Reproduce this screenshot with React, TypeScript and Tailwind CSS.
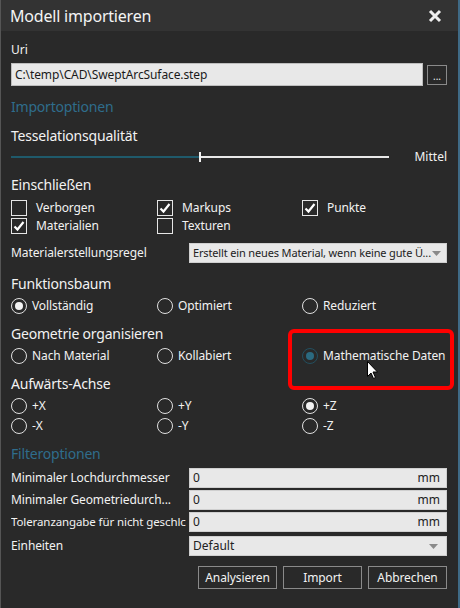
import React from "react";

const font = { fontFamily: '"Segoe UI", "Noto Sans", "Open Sans", sans-serif' };

function CheckBox({ label, checked }: { label: string; checked?: boolean }) {
  return (
    <div className="flex items-center h-[18px]">
      <span className="w-[16px] h-[16px] border border-[#e6e6e6] flex items-center justify-center shrink-0">
        {checked && (
          <svg width="12" height="12" viewBox="0 0 12 12">
            <path d="M1.5 6.5 L4.5 9.5 L10.5 2" fill="none" stroke="#ffffff" strokeWidth="2.2" />
          </svg>
        )}
      </span>
      <span className="ml-[9px] text-[12px] tracking-[-0.1px] text-[#f2f2f2]">{label}</span>
    </div>
  );
}

function Radio({ label, checked, dim }: { label: string; checked?: boolean; dim?: boolean }) {
  return (
    <div className="flex items-center h-[20px]">
      <span
        className={
          "w-[16px] h-[16px] rounded-full border-[1.5px] flex items-center justify-center shrink-0 " +
          (dim ? "border-[#234f5f]" : "border-[#e0e0e0]")
        }
      >
        {checked && (
          <span className={"w-[8px] h-[8px] rounded-full " + (dim ? "bg-[#2b6a80]" : "bg-[#f2f2f2]")} />
        )}
      </span>
      <span className="ml-[5px] text-[12px] tracking-[-0.1px] whitespace-nowrap text-[#f2f2f2]">{label}</span>
    </div>
  );
}

function Header({ children, blue }: { children: React.ReactNode; blue?: boolean }) {
  return (
    <div
      className={
        "h-[20px] leading-[20px] text-[14px] tracking-[-0.2px] " + (blue ? "text-[#2f6d8c]" : "text-[#f2f2f2]")
      }
    >
      {children}
    </div>
  );
}

function Arrow() {
  return (
    <svg width="9" height="5" viewBox="0 0 9 5" className="ml-auto mr-[5px] shrink-0">
      <path d="M0 0 H9 L4.5 5 Z" fill="#8a8a8a" />
    </svg>
  );
}

function FieldRow({ label, small, children }: { label: string; small?: boolean; children: React.ReactNode }) {
  return (
    <div className="flex items-center h-[20px]">
      <div
        className={
          "w-[178px] shrink-0 tracking-[-0.1px] text-[#f2f2f2] whitespace-nowrap overflow-hidden " +
          (small ? "text-[11.5px]" : "text-[12px]")
        }
      >
        {label}
      </div>
      <div className="flex-1 min-w-0 h-[20px] bg-[#e8e8e8] border border-[#cfcfcf] flex items-center px-[3px] text-[12px] text-[#222] whitespace-nowrap overflow-hidden">
        {children}
      </div>
    </div>
  );
}

export default function App() {
  return (
    <div
      className="w-[460px] h-[608px] bg-[#292929] border-l border-[#555] border-r-2 border-r-[#3f6a86] relative overflow-hidden"
      style={font}
    >
      <div className="h-[31px] bg-[#333333] flex items-center pl-[9px] pr-[16px]">
        <span className="text-[16px] tracking-[-0.2px] text-[#f4f4f4]">Modell importieren</span>
        <svg width="14" height="14" viewBox="0 0 14 14" className="ml-auto">
          <path d="M2 2 L12 12 M12 2 L2 12" stroke="#f0f0f0" strokeWidth="3" />
        </svg>
      </div>

      <div className="pl-[10px] pr-[11px]">
        <div className="mt-[9px] h-[20px] leading-[20px] text-[12px] text-[#f2f2f2]">Uri</div>
        <div className="mt-[3px] flex items-center">
          <div className="flex-1 h-[23px] bg-[#e8e8e8] border border-[#bdbdbd] flex items-center px-[3px] text-[12px] tracking-[-0.1px] text-[#1a1a1a]">
            C:\temp\CAD\SweptArcSuface.step
          </div>
          <div className="ml-[4px] w-[20px] h-[20px] border border-[#8a8a8a] flex items-end justify-center pb-[3px] text-[10px] leading-none text-[#eee]">
            ...
          </div>
        </div>

        <div className="mt-[11px]">
          <Header blue>Importoptionen</Header>
        </div>
        <div className="mt-[9px]">
          <Header>Tesselationsqualität</Header>
        </div>
        <div className="mt-[4px] h-[14px] flex items-center">
          <div className="w-[188px] h-[2px] bg-[#1f5a6b]" />
          <div className="w-[2px] h-[10px] bg-[#f0f0f0]" />
          <div className="w-[188px] h-[2px] bg-[#e8e8e8]" />
          <span className="ml-auto text-[12px] text-[#f2f2f2]">Mittel</span>
        </div>

        <div className="mt-[11px]">
          <Header>Einschließen</Header>
        </div>
        <div className="mt-[4px] grid grid-cols-[146px_145px_1fr]">
          <CheckBox label="Verborgen" />
          <CheckBox label="Markups" checked />
          <CheckBox label="Punkte" checked />
          <CheckBox label="Materialien" checked />
          <CheckBox label="Texturen" />
        </div>

        <div className="mt-[8px] flex items-center h-[20px]">
          <div className="w-[178px] shrink-0 text-[12px] tracking-[-0.1px] text-[#f2f2f2] whitespace-nowrap">
            Materialerstellungsregel
          </div>
          <div className="flex-1 min-w-0 h-[20px] bg-[#e8e8e8] border border-[#cfcfcf] flex items-center pl-[3px] text-[#222]">
            <span className="min-w-0 text-[11px] tracking-[-0.15px] whitespace-nowrap overflow-hidden">
              Erstellt ein neues Material, wenn keine gute Ü...
            </span>
            <Arrow />
          </div>
        </div>

        <div className="mt-[11px]">
          <Header>Funktionsbaum</Header>
        </div>
        <div className="mt-[2px] grid grid-cols-[146px_145px_1fr]">
          <Radio label="Vollständig" checked />
          <Radio label="Optimiert" />
          <Radio label="Reduziert" />
        </div>

        <div className="mt-[8px]">
          <Header>Geometrie organisieren</Header>
        </div>
        <div className="mt-[2px] grid grid-cols-[146px_145px_1fr]">
          <Radio label="Nach Material" />
          <Radio label="Kollabiert" />
          <Radio label="Mathematische Daten" checked dim />
        </div>

        <div className="mt-[8px]">
          <Header>Aufwärts-Achse</Header>
        </div>
        <div className="mt-[2px] grid grid-cols-[146px_145px_1fr]">
          <Radio label="+X" />
          <Radio label="+Y" />
          <Radio label="+Z" checked />
          <Radio label="-X" />
          <Radio label="-Y" />
          <Radio label="-Z" />
        </div>

        <div className="mt-[8px]">
          <Header blue>Filteroptionen</Header>
        </div>
        <div className="mt-[4px] flex flex-col gap-[2px]">
          <FieldRow label="Minimaler Lochdurchmesser">
            <span>0</span>
            <span className="ml-auto mr-[3px]">mm</span>
          </FieldRow>
          <FieldRow label="Minimaler Geometriedurch...">
            <span>0</span>
            <span className="ml-auto mr-[3px]">mm</span>
          </FieldRow>
          <FieldRow label="Toleranzangabe für nicht geschlc" small>
            <span>0</span>
            <span className="ml-auto mr-[3px]">mm</span>
          </FieldRow>
          <div className="mt-[2px]">
            <FieldRow label="Einheiten">
              <span>Default</span>
              <Arrow />
            </FieldRow>
          </div>
        </div>

        <div className="mt-[10px] flex justify-end gap-[6px]">
          {["Analysieren", "Import", "Abbrechen"].map((b) => (
            <div
              key={b}
              className="w-[79px] h-[23px] border border-[#8a8a8a] flex items-center justify-center text-[12px] tracking-[-0.1px] text-[#f2f2f2]"
            >
              {b}
            </div>
          ))}
        </div>
      </div>

      <div className="absolute left-[287px] top-[329px] w-[166px] h-[61px] border-[4px] border-[#ff0000] rounded-[6px]" />
      <svg className="absolute left-[366px] top-[361px]" width="12" height="19" viewBox="0 0 12 19">
        <path d="M0.5 0.5 V15.5 L4 12 L6.5 17.5 L8.5 16.5 L6 11 H10.5 Z" fill="#ffffff" stroke="#000000" strokeWidth="1" />
      </svg>
    </div>
  );
}
